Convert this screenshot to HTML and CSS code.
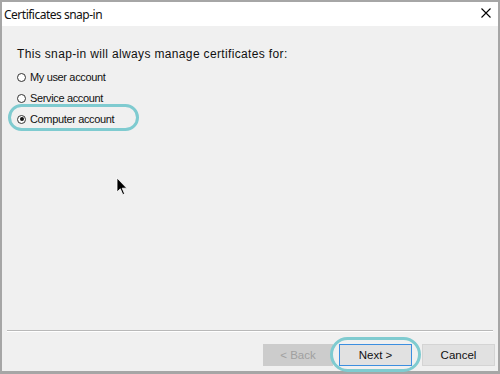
FILE: index.html
```html
<!DOCTYPE html>
<html>
<head>
<meta charset="utf-8">
<link rel="stylesheet" href="styles.css">
</head>
<body>
<div class="window">
  <div class="titlebar">
    <span class="title">Certificates snap-in</span>
    <svg class="close" width="10" height="10" viewBox="0 0 10 10"><path d="M0.5 0.5 L9.5 9.5 M9.5 0.5 L0.5 9.5" stroke="#000" stroke-width="1.1" fill="none"/></svg>
  </div>
  <div class="client">
    <div class="body">
      <p class="intro">This snap-in will always manage certificates for:</p>
      <div class="options">
        <label class="option"><span class="radio"></span>My user account</label>
        <label class="option"><span class="radio"></span>Service account</label>
        <label class="option"><span class="radio checked"></span>Computer account</label>
      </div>
      <div class="ring ring-option"></div>
      <svg class="cursor" width="12" height="19" viewBox="0 0 12 19"><path d="M1 1 L1 15 L4.3 11.8 L6.8 17.6 L8.6 16.8 L6.2 11.2 L10.8 11.2 Z" fill="#000" stroke="#fff" stroke-width="0.8"/></svg>
    </div>
    <div class="separator"></div>
    <div class="buttons">
      <button class="btn disabled">&lt; Back</button>
      <button class="btn primary">Next &gt;</button>
      <button class="btn cancel">Cancel</button>
      <div class="ring ring-next"></div>
    </div>
  </div>
</div>
</body>
</html>
```

FILE: styles.css
```css
* { box-sizing: border-box; }
html, body { margin: 0; padding: 0; }
body { width: 500px; height: 374px; overflow: hidden; background: #fff; }
.window {
  width: 500px; height: 374px;
  border: 2px solid #a6a6a6;
  border-bottom-width: 3px;
  display: flex; flex-direction: column;
  background: #f0f0f0;
  font-family: "Liberation Sans", Arial, sans-serif;
}
.titlebar {
  height: 24px; background: #fff;
  display: flex; align-items: center; justify-content: space-between;
  padding: 0 7px 0 2px;
}
.title { font-family: "Noto Sans", "Open Sans", sans-serif; font-size: 12px; color: #111; letter-spacing: -0.5px; }
.close { display: block; margin-top: -3px; }
.client { flex: 1; display: flex; flex-direction: column; }
.body { flex: 1; position: relative; padding: 21px 0 0 15px; }
.intro { margin: 0; font-size: 12px; color: #111; line-height: 14px; letter-spacing: 0.35px; }
.options { display: flex; flex-direction: column; gap: 7px; margin-top: 9px; }
.option { display: flex; align-items: center; font-size: 11px; line-height: 14px; color: #111; letter-spacing: -0.35px; }
.radio {
  width: 9px; height: 9px; border-radius: 50%;
  border: 1px solid #333; background: #fff;
  margin-right: 4px; position: relative;
}
.radio.checked::after {
  content: ""; position: absolute; left: 1.5px; top: 1.5px;
  width: 4px; height: 4px; border-radius: 50%; background: #111;
}
.ring {
  position: absolute; border: 3px solid #7fcbd0; border-radius: 14px;
}
.ring-option { left: 6px; top: 78px; width: 131px; height: 27px; }
.cursor { position: absolute; left: 114px; top: 151px; }
.separator {
  margin: 0 5px 0 5px; height: 2px;
  border-top: 1px solid #b9b9b9; border-bottom: 1px solid #fff;
}
.buttons {
  position: relative; height: 39px;
  display: flex; justify-content: flex-end; align-items: flex-start;
  padding: 12px 3px 0 0; gap: 0;
}
.btn {
  height: 22px; font-family: "Liberation Sans", Arial, sans-serif;
  font-size: 11.5px; color: #111; background: #e1e1e1;
  border: 1px solid #adadad; padding: 0;
}
.btn.disabled { width: 70px; background: #cccccc; border-color: #cccccc; color: #a0a0a0; margin-right: 6px; }
.btn.primary { width: 73px; border: 1px solid #3c8ee0; box-shadow: inset 0 0 0 1px #e1e1e1; margin-right: 10px; }
.btn.cancel { width: 73px; border-color: #d4d4d4; }
.ring-next { left: 328px; top: 5px; width: 91px; height: 35px; border-radius: 18px; }
```
